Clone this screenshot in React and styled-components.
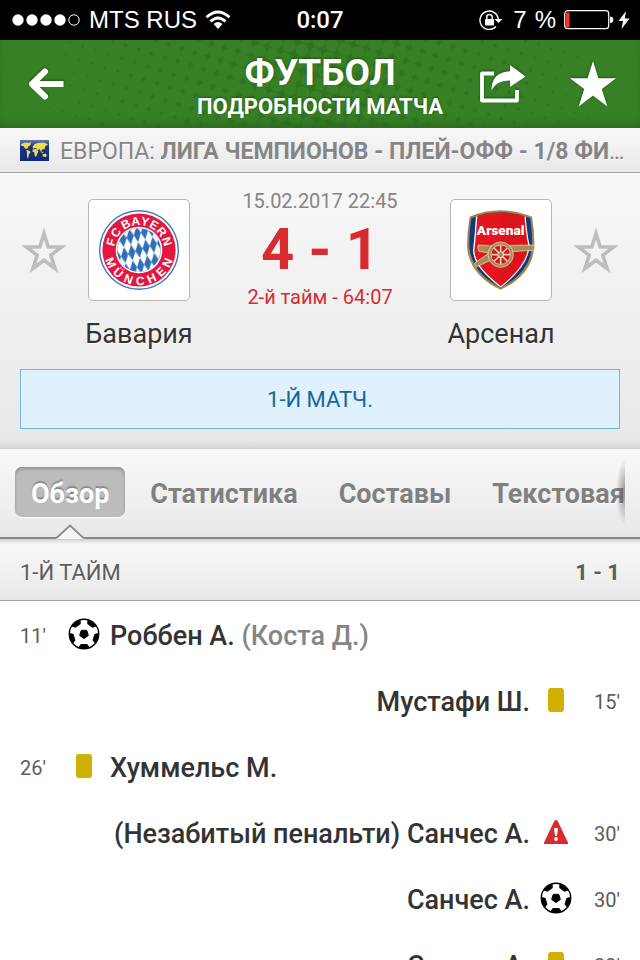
import React, { useState } from "react";
import styled, { createGlobalStyle } from "styled-components";

const GlobalStyle = createGlobalStyle`
  * {
    box-sizing: border-box;
  }
  body {
    margin: 0;
    background: #fff;
    font-family: Roboto, "Noto Sans", sans-serif;
    color: #333;
  }
  button {
    font-family: inherit;
    border: 0;
    padding: 0;
    background: none;
    cursor: pointer;
  }
  h1, h2, p, ul {
    margin: 0;
    padding: 0;
  }
`;

const tabs = ["Обзор", "Статистика", "Составы", "Текстовая"];

// side says which team the event belongs to
const events = [
  { minute: "11'", type: "goal", player: "Роббен А.", assist: "(Коста Д.)", side: "home" },
  { minute: "15'", type: "card", player: "Мустафи Ш.", side: "away" },
  { minute: "26'", type: "card", player: "Хуммельс М.", side: "home" },
  { minute: "30'", type: "missed", player: "(Незабитый пенальти) Санчес А.", side: "away" },
  { minute: "30'", type: "goal", player: "Санчес А.", side: "away" },
  { minute: "33'", type: "card", player: "Санчес А.", side: "away" },
];

const STAR = "M23 0L28.4 17.3H46L31.8 28L37.3 45.5L23 34.6L8.7 45.5L14.2 28L0 17.3H17.6Z";

// Halftone dots, they get bigger away from the middle of the header
const dots = [];
for (let row = -26; row < 27; row++) {
  for (let col = -27; col < 28; col++) {
    const x = 320 + col * 13 - row * 4;
    const y = 44 + row * 13 + col * 4;
    if (x > -10 && x < 650 && y > -10 && y < 98) {
      const distance = Math.abs(x - 320) / 320;
      dots.push({ x, y, r: 6.4 + distance * 3.2 });
    }
  }
}

const HeaderPattern = () => (
  <PatternSvg viewBox="0 0 640 88" preserveAspectRatio="xMidYMid slice" aria-hidden="true">
    <rect width="640" height="88" fill="#30741f" />
    {dots.map((dot) => (
      <circle key={`${dot.x}-${dot.y}`} cx={dot.x} cy={dot.y} r={dot.r} fill="#378026" />
    ))}
  </PatternSvg>
);

const SignalIcon = () => (
  <svg width="69" height="14" aria-hidden="true">
    {[6, 20, 34, 48].map((x) => (
      <circle key={x} cx={x} cy="7" r="5.7" fill="#fff" />
    ))}
    <circle cx="62" cy="7" r="5.2" fill="none" stroke="#fff" />
  </svg>
);

const WifiIcon = () => (
  <svg width="26" height="20" viewBox="0 0 26 20" fill="none" stroke="#fff" strokeWidth="2.8" aria-hidden="true">
    <path d="M1.5 7.2Q13-3.2 24.500 7.2" />
    <path d="M5.500 11.400Q13 4.600 20.500 11.400" />
    <path d="M8.600 14Q13 9.800 17.400 14L13 19Z" fill="#fff" stroke="none" />
  </svg>
);

const LockIcon = () => (
  <svg width="24" height="20" viewBox="0 0 24 20" fill="none" stroke="#fff" strokeWidth="1.4" aria-hidden="true">
    <path d="M17 16.500A9.200 9.200 0 1 1 19.300 9" />
    <path d="M15.500 9H23.500L19.500 13Z" fill="#fff" stroke="none" />
    <rect x="6" y="9" width="9" height="6.500" rx="0.8" fill="#fff" stroke="none" />
    <path d="M7.800 9V7.200a2.700 2.700 0 0 1 5.400 0V9" />
  </svg>
);

const BatteryIcon = () => (
  <svg width="50" height="20" viewBox="0 0 50 20" aria-hidden="true">
    <rect x="0.7" y="0.7" width="44" height="18" rx="3" fill="none" stroke="#fff" strokeWidth="1.2" />
    <rect x="2" y="2.500" width="3.500" height="15" fill="#f0392e" />
    <path d="M46 6.500a3.300 3.300 0 0 1 0 6.600Z" fill="#fff" />
  </svg>
);

const BoltIcon = () => (
  <svg width="12" height="20" viewBox="0 0 12 20" aria-hidden="true">
    <path d="M8 1L0.5 11H5L3.500 19L11.500 8.500H6.800Z" fill="#fff" />
  </svg>
);

const BackIcon = () => (
  <svg width="36" height="32" viewBox="0 0 36 32" aria-hidden="true">
    <path d="M17 3.500L4 16L17 28.500" fill="none" stroke="#fff" strokeWidth="6" strokeLinejoin="round" strokeLinecap="round" />
    <path d="M5 16H35.500" stroke="#fff" strokeWidth="6" />
  </svg>
);

const ShareIcon = () => (
  <svg width="46" height="38" viewBox="0 0 46 38" aria-hidden="true">
    <path d="M14 8.500H2V35.500H37V25" fill="none" stroke="#fff" strokeWidth="3.800" strokeLinejoin="round" />
    <path d="M30 0L45.500 11.500L30 22V15.500C20 15.500 15 19 11.500 25.500C11.500 13 18 6.500 30 6.200Z" fill="#fff" />
  </svg>
);

const StarIcon = () => (
  <svg width="50" height="48" viewBox="-1 -1 48 48" aria-hidden="true">
    <path d={STAR} fill="#fff" />
  </svg>
);

const OutlineStarIcon = () => (
  <svg width="48" height="48" viewBox="-1 -1 48 48" aria-hidden="true">
    <path
      d="M23 5.500L27.200 19H40.500L29.800 27.200L34 40.500L23 32.200L12 40.500L16.200 27.200L5.500 19H18.800Z"
      fill="none"
      stroke="#bdbdbd"
      strokeWidth="3.600"
    />
  </svg>
);

const WorldIcon = () => (
  <svg width="29" height="21" viewBox="0 0 29 21" aria-hidden="true">
    <defs>
      <linearGradient id="sea" x1="0" y1="0" x2="0" y2="1">
        <stop offset="0" stopColor="#6878b4" />
        <stop offset="0.3" stopColor="#1c3486" />
        <stop offset="1" stopColor="#13297d" />
      </linearGradient>
    </defs>
    <rect width="29" height="21" fill="url(#sea)" />
    <g fill="#f0dc50">
      <path d="M1 4L5 2.500L9 3L11 2L10.500 5L8.500 6.500L7 9L5 8.500L3.500 6L1.500 6Z" />
      <path d="M6.500 10L9 10.500L10.500 12L9 14.500L8 18.500L7 17L7 13Z" />
      <path d="M12.500 7L14.500 4L18 3L24 2.500L28 4.500L25.500 6L24.500 9L22 9.500L21 12L19.500 9L17.500 10.500L16 8L13 8.500Z" />
      <path d="M12.500 9.500L16 9L18.500 11.500L17.500 13.500L16 17L14.800 16L14.300 12.500L12.500 11.500Z" />
      <path d="M22.500 14.500L25.500 13.500L27 15.500L25.500 17L22.800 16.500ZM21 11.500L24 12.500L22 13Z" />
    </g>
  </svg>
);

const bayernTop = [
  ["F", -74], ["C", -53], ["B", -27], ["A", -7], ["Y", 12], ["E", 31], ["R", 51], ["N", 73],
];
const bayernBottom = [
  ["M", 66], ["Ü", 42], ["N", 20], ["C", -2], ["H", -24], ["E", -45], ["N", -66],
];

const BayernCrest = () => (
  <CrestSvg width="80" height="80" viewBox="-40 -40 80 80" role="img" aria-label="FC Bayern">
    <defs>
      <pattern id="lozenge" width="7.4" height="16" patternUnits="userSpaceOnUse" patternTransform="rotate(-6) skewY(-14)">
        <path d="M3.7 0L7.4 8L3.7 16L0 8Z" fill="#fff" />
      </pattern>
    </defs>
    <circle r="40" fill="#3e78be" />
    <circle r="38.600" fill="#fff" />
    <circle r="36.600" fill="#e5173f" />
    <circle r="23.300" fill="#fff" />
    <circle r="21.800" fill="#2f6fb8" />
    <circle r="21.800" fill="url(#lozenge)" />
    {bayernTop.map(([letter, angle]) => (
      <text key={angle} y="-25" transform={`rotate(${angle})`}>{letter}</text>
    ))}
    {bayernBottom.map(([letter, angle]) => (
      <text key={angle} y="35" transform={`rotate(${angle})`}>{letter}</text>
    ))}
  </CrestSvg>
);

const ArsenalCrest = () => (
  <CrestSvg width="68" height="80" viewBox="82 59 204 240" role="img" aria-label="Arsenal">
    <defs>
      <clipPath id="shield">
        <path d="M95 84Q138 66 183 66Q228 66 272 84Q278 130 277 165C275 225 232 268 183 291C134 268 91 225 89 165Q88 130 95 84Z" />
      </clipPath>
    </defs>
    <path d="M90 79Q136 60 183 60Q231 60 277 79Q285 125 284 168C281 230 236 276 183 298C131 276 85 230 82 168Q82 125 90 79Z" fill="#9d8650" />
    <g clipPath="url(#shield)">
      <rect x="82" y="60" width="204" height="240" fill="#133a7c" />
      <path d="M112 60H255Q259 130 268 165C266 215 226 256 183 290C140 256 104 222 102 180Q108 130 112 60Z" fill="#e3151f" stroke="#fff" strokeWidth="4" />
      <path d="M183 66H254Q259 130 265 165C264 215 226 256 183 288Z" fill="#c8101b" opacity="0.35" />
    </g>
    <g fill="#a68d58" stroke="#f2e6cf" strokeWidth="2">
      <path d="M116 164L150 166L284 164V180L210 184L156 208L110 230L104 219L148 188L118 183Q112 174 116 164Z" />
      <circle cx="183" cy="193" r="38" />
    </g>
    <circle cx="183" cy="193" r="29" fill="#d41520" stroke="#f2e6cf" strokeWidth="2" />
    <g stroke="#e0cfa4" strokeWidth="5">
      <path d="M183 165V221M155 193H211M163 173L203 213M203 173L163 213" />
    </g>
    <circle cx="183" cy="193" r="9" fill="#a68d58" stroke="#f2e6cf" strokeWidth="3" />
    <ArsenalText x="183" y="133">Arsenal</ArsenalText>
  </CrestSvg>
);

const BallIcon = () => (
  <svg width="32" height="32" viewBox="-16 -16 32 32" role="img" aria-label="Гол">
    <defs>
      <clipPath id="ball">
        <circle r="15" />
      </clipPath>
    </defs>
    <circle r="14.700" fill="#fff" stroke="#000" strokeWidth="1.400" />
    <path d="M0 4.600L-4.400 1.400L-2.700-3.700H2.700L4.400 1.400Z" stroke="#000" strokeLinejoin="round" />
    <g clipPath="url(#ball)">
      {[0, 72, 144, 216, 288].map((angle) => (
        <path key={angle} d="M-3.200 10L3.200 10L6 14L3 17H-3L-6 14Z" transform={`rotate(${angle})`} />
      ))}
    </g>
  </svg>
);

const CardIcon = () => (
  <svg width="32" height="26" viewBox="0 0 32 26" role="img" aria-label="Желтая карточка">
    <rect x="8" y="1" width="16" height="24" rx="3" fill="#cfb000" />
  </svg>
);

const MissedIcon = () => (
  <svg width="32" height="26" viewBox="0 0 32 26" role="img" aria-label="Незабитый пенальти">
    <path d="M14.300 2Q16 0 17.700 2L28 23.500V25H4V23.500Z" fill="#d92b2f" />
    <path d="M14 9H18L17 17H15Z" fill="#fff" />
    <circle cx="16" cy="20" r="1.900" fill="#fff" />
  </svg>
);

const PointerIcon = () => (
  <PointerSvg width="30" height="16" viewBox="0 0 30 16" aria-hidden="true">
    <path d="M0 16V14L2 13L15 1L28 13L30 14V16Z" fill="#f4f4f4" />
    <path d="M0 14Q2 14 3 12.500L15 1.500L27 12.500Q28 14 30 14" fill="none" stroke="#8a8686" strokeWidth="1.800" />
  </PointerSvg>
);

const icons = { goal: BallIcon, card: CardIcon, missed: MissedIcon };

const App = () => {
  const [activeTab, setActiveTab] = useState("Обзор");

  return (
    <Screen>
      <GlobalStyle />
      <StatusBar>
        <StatusGroup>
          <SignalIcon />
          <span>MTS RUS</span>
          <WifiIcon />
        </StatusGroup>
        <Clock>0:07</Clock>
        <StatusGroup $end>
          <LockIcon />
          <Charge>
            <span>7</span>
            <span>%</span>
          </Charge>
          <BatteryIcon />
          <BoltIcon />
        </StatusGroup>
      </StatusBar>

      <Header>
        <HeaderPattern />
        <HeaderActions>
          <button aria-label="Назад"><BackIcon /></button>
        </HeaderActions>
        <Heading>
          <Title>ФУТБОЛ</Title>
          <Subtitle>ПОДРОБНОСТИ МАТЧА</Subtitle>
        </Heading>
        <HeaderActions $end>
          <button aria-label="Поделиться"><ShareIcon /></button>
          <button aria-label="В избранное"><StarIcon /></button>
        </HeaderActions>
      </Header>

      <League>
        <WorldIcon />
        <LeagueName>
          ЕВРОПА: <strong>ЛИГА ЧЕМПИОНОВ - ПЛЕЙ-ОФФ - 1/8 ФИНАЛА</strong>
        </LeagueName>
      </League>

      <Match>
        <Teams>
          <FavoriteButton aria-label="Бавария в избранное"><OutlineStarIcon /></FavoriteButton>
          <Team>
            <CrestBox><BayernCrest /></CrestBox>
            <TeamName>Бавария</TeamName>
          </Team>
          <Result>
            <MatchDate>15.02.2017 22:45</MatchDate>
            <Score>4 - 1</Score>
            <MatchTime>2-й тайм - 64:07</MatchTime>
          </Result>
          <Team>
            <CrestBox><ArsenalCrest /></CrestBox>
            <TeamName>Арсенал</TeamName>
          </Team>
          <FavoriteButton aria-label="Арсенал в избранное"><OutlineStarIcon /></FavoriteButton>
        </Teams>
        <Notice>1-Й МАТЧ.</Notice>
      </Match>

      <TabBar>
        <TabList>
          {tabs.map((tab) => (
            <TabItem key={tab}>
              <Tab $active={tab === activeTab} onClick={() => setActiveTab(tab)}>
                {tab}
              </Tab>
              {tab === activeTab && <PointerIcon />}
            </TabItem>
          ))}
        </TabList>
        <TabFade />
      </TabBar>

      <Period>
        <PeriodName>1-Й ТАЙМ</PeriodName>
        <PeriodScore>1 - 1</PeriodScore>
      </Period>

      <EventList>
        {events.map((event, index) => {
          const Icon = icons[event.type];
          return (
            <EventRow key={index} $away={event.side === "away"}>
              <Minute $away={event.side === "away"}>{event.minute}</Minute>
              <Icon />
              <Player>
                {event.player} {event.assist && <Assist>{event.assist}</Assist>}
              </Player>
            </EventRow>
          );
        })}
      </EventList>
    </Screen>
  );
};

const Screen = styled.div`
  display: flex;
  flex-direction: column;
  height: 100vh;
  overflow: hidden;
`;

const StatusBar = styled.div`
  flex: none;
  display: grid;
  grid-template-columns: 1fr auto 1fr;
  align-items: center;
  height: 40px;
  padding: 0 10px;
  background: #000;
  color: #fff;
  font-family: "Liberation Sans", Arial, sans-serif;
  font-size: 24px;
  white-space: nowrap;
`;

const StatusGroup = styled.div`
  display: flex;
  align-items: center;
  justify-content: ${(props) => (props.$end ? "flex-end" : "flex-start")};
  gap: ${(props) => (props.$end ? "4px" : "8px")};
  padding-left: 2px;
`;

const Clock = styled.span`
  font-family: Roboto, sans-serif;
  font-weight: 500;
`;

const Charge = styled.span`
  display: flex;
  gap: 8px;
  padding: 0 4px 0 6px;
`;

const Header = styled.header`
  flex: none;
  position: relative;
  display: grid;
  grid-template-columns: 1fr auto 1fr;
  align-items: center;
  height: 88px;
  padding: 0 22px;
  overflow: hidden;
  box-shadow: inset 0 -8px 8px -4px #2a6a1d;
`;

const PatternSvg = styled.svg`
  position: absolute;
  inset: 0;
  width: 100%;
  height: 100%;
  z-index: -1;
`;

const HeaderActions = styled.div`
  display: flex;
  align-items: center;
  justify-content: ${(props) => (props.$end ? "flex-end" : "flex-start")};
  gap: 42px;
  padding-left: 6px;
  button {
    display: flex;
  }
  svg {
    filter: drop-shadow(0 -1px 1px #1f5514);
  }
`;

const Heading = styled.div`
  padding-top: 6px;
  text-align: center;
  color: #fff;
  text-shadow: 0 -1px 2px #1f5514;
`;

const Title = styled.h1`
  font-size: 37px;
  line-height: 40px;
  font-weight: 700;
`;

const Subtitle = styled.p`
  font-size: 22px;
  line-height: 28px;
  font-weight: 700;
`;

const League = styled.div`
  flex: none;
  display: flex;
  align-items: center;
  gap: 11px;
  height: 45px;
  padding: 0 12px 0 20px;
  border-bottom: 1px solid #a3a3a3;
  background: linear-gradient(#f8f8f8, #e8e8e8);

  svg {
    flex: none;
  }
`;

const LeagueName = styled.h2`
  min-width: 0;
  padding-top: 3px;
  overflow: hidden;
  text-overflow: ellipsis;
  white-space: nowrap;
  font-size: 23px;
  line-height: 32px;
  font-weight: 400;
  color: #858585;
  text-shadow: 0 1px 0 #fff;
`;

const Match = styled.section`
  flex: none;
  padding: 16px 20px 19px;
  background: linear-gradient(#f7f7f7, #e9e9e9 calc(100% - 8px), #d6d6d6);
`;

const Teams = styled.div`
  display: grid;
  grid-template-columns: 48px 102px 1fr 102px 48px;
  column-gap: 20px;
  align-items: start;
`;

const FavoriteButton = styled.button`
  display: flex;
  margin-top: 38px;
`;

const Team = styled.div`
  display: flex;
  flex-direction: column;
  align-items: center;
  padding-top: 10px;
`;

const CrestBox = styled.div`
  display: flex;
  align-items: center;
  justify-content: center;
  width: 102px;
  height: 102px;
  border: 1px solid #b5b5b5;
  border-radius: 5px;
  background: #fff;
`;

const CrestSvg = styled.svg`
  text {
    font-family: "Liberation Sans", Arial, sans-serif;
    font-size: 12px;
    font-weight: 700;
    fill: #fff;
    text-anchor: middle;
  }
`;

const ArsenalText = styled.text`
  && {
    font-family: Roboto, sans-serif;
    font-size: 41px;
    font-weight: 900;
  }
`;

const TeamName = styled.p`
  margin-top: 16px;
  font-size: 27px;
  line-height: 34px;
  white-space: nowrap;
  text-shadow: 0 1px 0 #fff;
`;

const Result = styled.div`
  display: flex;
  flex-direction: column;
  align-items: center;
  white-space: nowrap;
  color: #d92b2f;
`;

const MatchDate = styled.p`
  font-size: 20px;
  line-height: 24px;
  color: #858585;
`;

const Score = styled.p`
  font-size: 58px;
  line-height: 72px;
  font-weight: 700;
`;

const MatchTime = styled.p`
  font-size: 20px;
  line-height: 24px;
`;

const Notice = styled.p`
  margin-top: 18px;
  padding-top: 2px;
  border: 1px solid #6fb6e0;
  background: #dff1fd;
  color: #15679b;
  font-size: 22px;
  line-height: 56px;
  text-align: center;
`;

const TabBar = styled.nav`
  flex: none;
  position: relative;
  padding: 0 15px;
  border-top: 1px solid #cfcfcf;
  border-bottom: 2px solid #8a8686;
  background: linear-gradient(#f8f8f8, #e8e8e8);
`;

const TabList = styled.ul`
  display: flex;
  gap: 9px;
  padding: 18px 0 22px;
  overflow: hidden;
  list-style: none;
  /* room for the pointer that covers the border */
  margin-bottom: -2px;
`;

const TabItem = styled.li`
  flex: none;
  position: relative;
`;

const Tab = styled.button`
  height: 50px;
  padding: 3px 16px 0;
  border-radius: 7px;
  font-size: 27px;
  font-weight: 700;
  white-space: nowrap;
  color: ${(props) => (props.$active ? "#fff" : "#808080")};
  background: ${(props) => (props.$active ? "#bcbcbc" : "none")};
  box-shadow: ${(props) => (props.$active ? "inset 0 2px 3px #8e8e8e, 0 1px 0 #fff" : "none")};
  text-shadow: ${(props) => (props.$active ? "0 -2px 1px #8a8a8a" : "0 1px 0 #fff")};
`;

const PointerSvg = styled.svg`
  position: absolute;
  top: 57px;
  left: 50%;
  margin-left: -15px;
  z-index: 1;
`;

const TabFade = styled.div`
  position: absolute;
  top: 10px;
  right: 15px;
  width: 9px;
  height: 66px;
  background: radial-gradient(ellipse at right, #5559 0%, transparent 70%);
`;

const Period = styled.div`
  flex: none;
  display: flex;
  align-items: center;
  justify-content: space-between;
  height: 62px;
  padding: 6px 20px 0;
  border-bottom: 1px solid #a3a3a3;
  background: linear-gradient(#cfcfcf, #f8f8f8 5px, #e8e8e8);
  color: #5c5c5c;
  font-size: 22px;
  text-shadow: 0 1px 0 #fff;
`;

const PeriodName = styled.h2`
  font-size: 22px;
  font-weight: 400;
`;

const PeriodScore = styled.span`
  font-weight: 700;
`;

const EventList = styled.ul`
  flex: 1;
  min-height: 0;
  overflow: hidden;
  list-style: none;
`;

const EventRow = styled.li`
  display: flex;
  flex-direction: ${(props) => (props.$away ? "row-reverse" : "row")};
  align-items: center;
  gap: 10px;
  height: 66px;
  padding: 0 20px;
`;

const Minute = styled.span`
  width: 38px;
  padding-top: 3px;
  font-size: 20px;
  color: #5c5c5c;
  text-align: ${(props) => (props.$away ? "right" : "left")};
`;

const Player = styled.span`
  padding-top: 3px;
  font-size: 27px;
  font-weight: 500;
  white-space: nowrap;
`;

const Assist = styled.span`
  color: #858585;
`;

export default App;
